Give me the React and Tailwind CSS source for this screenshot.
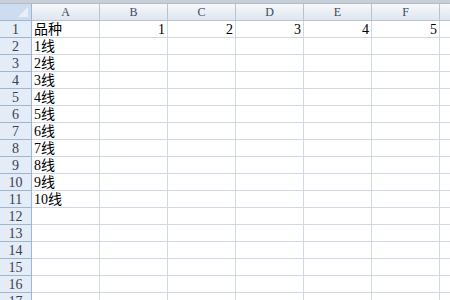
const cols = ["A", "B", "C", "D", "E", "F"];
const rows = [
  ["品种", "1", "2", "3", "4", "5"],
  ["1线"],
  ["2线"],
  ["3线"],
  ["4线"],
  ["5线"],
  ["6线"],
  ["7线"],
  ["8线"],
  ["9线"],
  ["10线"],
  [], [], [], [], [], [],
];

const font = { fontFamily: '"Liberation Serif", "Noto Sans CJK SC", serif' };

export default function App() {
  return (
    <div className="w-[450px] h-[300px] overflow-hidden bg-white" style={font}>
      <div className="h-[4px] bg-[#c9cfd8] border-b border-[#b3bcc8]" />
      <div className="grid grid-cols-[32px_repeat(6,68px)_1fr]">
        {/* corner */}
        <div className="relative h-[17px] bg-[#cddcf0] border-r border-b border-[#9eb6ce]">
          <div className="absolute right-[3px] bottom-[3px] w-0 h-0 border-l-[10px] border-l-transparent border-b-[10px] border-b-[#e9eff8]" />
        </div>
        {cols.map((c) => (
          <div
            key={c}
            className="h-[17px] bg-gradient-to-b from-[#f6f8fb] to-[#dfe6ef] border-r border-b border-[#b7c3d1] text-[12px] leading-[17px] text-center text-[#3a4a5c]"
          >
            {c}
          </div>
        ))}
        <div className="h-[17px] bg-gradient-to-b from-[#f6f8fb] to-[#dfe6ef] border-b border-[#b7c3d1]" />

        {rows.map((r, i) => (
          <Row key={i} n={i + 1} cells={r} />
        ))}
      </div>
    </div>
  );
}

function Row({ n, cells }) {
  return (
    <>
      <div className="h-[17px] bg-[#e4ecf7] border-r border-b border-[#9eb6ce] text-[14px] leading-[17px] text-center text-[#3a4150]">
        {n}
      </div>
      {cols.map((c, j) => {
        const v = cells[j] ?? "";
        const num = /^\d+$/.test(v);
        return (
          <div
            key={c}
            className={`h-[17px] border-r border-b border-[#d0d7e5] text-[14px] leading-[17px] text-black whitespace-nowrap px-[2px] ${num ? "text-right" : "text-left"}`}
          >
            {v}
          </div>
        );
      })}
      <div className="h-[17px] border-b border-[#d0d7e5]" />
    </>
  );
}
